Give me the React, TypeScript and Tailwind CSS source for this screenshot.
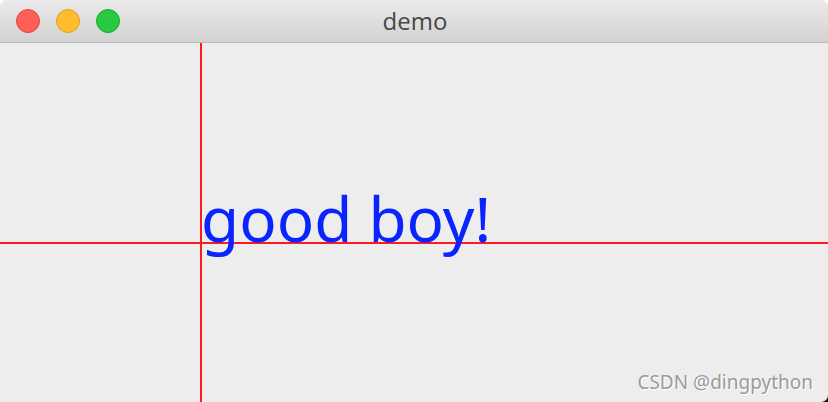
export default function App() {
  return (
    <div className="w-[828px] h-[402px] bg-white overflow-hidden">
      <div className="relative w-full h-full flex flex-col rounded-t-[7px] overflow-hidden bg-[#ededed]">
        {/* title bar */}
        <div className="relative h-[43px] shrink-0 flex items-center bg-gradient-to-b from-[#ebebeb] to-[#d2d2d2] border-b border-[#b9b9b9]">
          <div className="flex items-center gap-[16px] pl-[16px]">
            <span className="w-[24px] h-[24px] rounded-full bg-[#fe5f57] border border-[#e2463f]" />
            <span className="w-[24px] h-[24px] rounded-full bg-[#febc2e] border border-[#e1a116]" />
            <span className="w-[24px] h-[24px] rounded-full bg-[#28c840] border border-[#1aab29]" />
          </div>
          <div className="absolute inset-0 flex items-center justify-center pl-[2px] pb-[1px] text-[24px] text-[#474747] font-['Open_Sans',sans-serif]">
            demo
          </div>
        </div>

        {/* canvas */}
        <div className="relative flex-1">
          <div className="absolute left-[200px] top-0 bottom-0 w-[2px] bg-[#ff1a22]" />
          <div className="absolute left-0 right-0 top-[199px] h-[2px] bg-[#ff1a22]" />
          <div className="absolute left-[201px] top-[144px] text-[62px] leading-none text-[#0a24ff] font-['Noto_Sans',sans-serif]">
            good boy!
          </div>
          <div className="absolute right-[15px] bottom-[6px] text-[19px] text-[#9b9b9b] font-['Noto_Sans',sans-serif] [text-shadow:1px_1px_0_#ffffff]">
            CSDN @dingpython
          </div>
          <div className="absolute right-0 bottom-0 w-[8px] h-[8px] bg-[#1a1a1a]">
            <div className="w-full h-full bg-[#ededed] rounded-br-[7px]" />
          </div>
        </div>
      </div>
    </div>
  );
}
